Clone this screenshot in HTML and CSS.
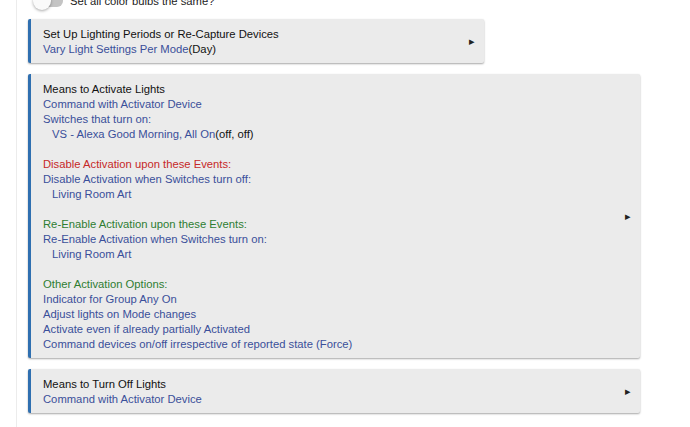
FILE: index.html
```html
<!DOCTYPE html>
<html>
<head>
<meta charset="utf-8">
<link rel="stylesheet" href="styles.css">
</head>
<body>
<div class="page">
  <div class="toggle-row">
    <span class="toggle"><span class="track"></span><span class="knob"></span></span>
    <span class="toggle-label">Set all color bulbs the same?</span>
  </div>

  <div class="card card-narrow">
    <div class="card-body">
      <div class="title">Set Up Lighting Periods or Re-Capture Devices</div>
      <div><span class="link">Vary Light Settings Per Mode</span>(Day)</div>
    </div>
    <span class="arrow">&#9656;</span>
  </div>

  <div class="card">
    <div class="card-body">
      <div class="title">Means to Activate Lights</div>
      <div class="link">Command with Activator Device</div>
      <div class="link">Switches that turn on:</div>
      <div class="indent"><span class="link">VS - Alexa Good Morning, All On</span>(off, off)</div>
      <div class="blank"></div>
      <div class="red">Disable Activation upon these Events:</div>
      <div class="link">Disable Activation when Switches turn off:</div>
      <div class="indent link">Living Room Art</div>
      <div class="blank"></div>
      <div class="green">Re-Enable Activation upon these Events:</div>
      <div class="link">Re-Enable Activation when Switches turn on:</div>
      <div class="indent link">Living Room Art</div>
      <div class="blank"></div>
      <div class="green">Other Activation Options:</div>
      <div class="link">Indicator for Group Any On</div>
      <div class="link">Adjust lights on Mode changes</div>
      <div class="link">Activate even if already partially Activated</div>
      <div class="link">Command devices on/off irrespective of reported state (Force)</div>
    </div>
    <span class="arrow">&#9656;</span>
  </div>

  <div class="card">
    <div class="card-body">
      <div class="title">Means to Turn Off Lights</div>
      <div class="link">Command with Activator Device</div>
    </div>
    <span class="arrow">&#9656;</span>
  </div>
</div>
</body>
</html>
```

FILE: styles.css
```css
html, body {
  margin: 0;
  padding: 0;
  background: #ffffff;
}
body {
  font-family: "Liberation Sans", Arial, sans-serif;
  font-size: 11.25px;
  color: #111111;
  overflow: hidden;
}
.page {
  margin-left: 16px;
  border-left: 1px solid #ececec;
  padding-left: 11px;
  width: 640px;
  height: 440px;
}
.toggle-row {
  display: flex;
  align-items: center;
  height: 20px;
  margin-top: -9px;
  margin-bottom: 8px;
  gap: 7px;
}
.toggle {
  display: block;
  width: 30px;
  height: 18px;
  margin-left: 5px;
  position: relative;
}
.toggle .track {
  display: block;
  width: 22px;
  height: 12px;
  border-radius: 6px;
  background: #c4c4c4;
  margin: 3px 0 0 8px;
}
.toggle .knob {
  position: absolute;
  left: 0;
  top: 0;
  width: 18px;
  height: 18px;
  border-radius: 50%;
  background: #fafafa;
  box-shadow: 0 1px 3px rgba(0,0,0,0.35);
}
.toggle-label {
  color: #222;
}
.card {
  display: flex;
  align-items: center;
  background: #ebebeb;
  border-left: 3px solid #2f6fb0;
  border-radius: 2px;
  box-shadow: 0 1px 2px rgba(0,0,0,0.35);
  width: 609px;
  margin-bottom: 11px;
}
.card-narrow {
  width: 453px;
}
.card-body {
  flex: 1;
  padding: 8px 12px 6px 12px;
  line-height: 15px;
}
.arrow {
  font-size: 11px;
  color: #222;
  margin-right: 9px;
}
.link {
  color: #3a4f9a;
}
.red {
  color: #c62828;
}
.green {
  color: #2e7d32;
}
.indent {
  padding-left: 9px;
}
.blank {
  height: 15px;
}
.title {
  color: #111;
}
```
